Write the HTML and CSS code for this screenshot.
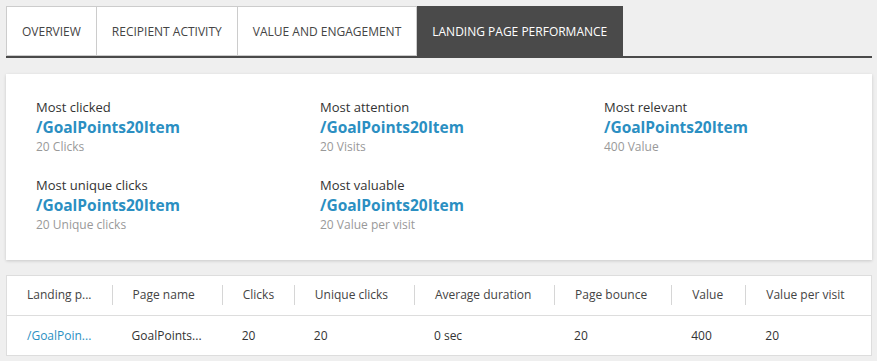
FILE: index.html
```html
<!DOCTYPE html>
<html>
<head>
<meta charset="utf-8">
<link rel="stylesheet" href="styles.css">
</head>
<body>
  <nav class="tabs">
    <a class="tab">OVERVIEW</a>
    <a class="tab">RECIPIENT ACTIVITY</a>
    <a class="tab">VALUE AND ENGAGEMENT</a>
    <a class="tab active">LANDING PAGE PERFORMANCE</a>
  </nav>

  <section class="summary">
    <div class="stat">
      <div class="stat-label">Most clicked</div>
      <a class="stat-link">/GoalPoints20Item</a>
      <div class="stat-sub">20 Clicks</div>
    </div>
    <div class="stat">
      <div class="stat-label">Most attention</div>
      <a class="stat-link">/GoalPoints20Item</a>
      <div class="stat-sub">20 Visits</div>
    </div>
    <div class="stat">
      <div class="stat-label">Most relevant</div>
      <a class="stat-link">/GoalPoints20Item</a>
      <div class="stat-sub">400 Value</div>
    </div>
    <div class="stat">
      <div class="stat-label">Most unique clicks</div>
      <a class="stat-link">/GoalPoints20Item</a>
      <div class="stat-sub">20 Unique clicks</div>
    </div>
    <div class="stat">
      <div class="stat-label">Most valuable</div>
      <a class="stat-link">/GoalPoints20Item</a>
      <div class="stat-sub">20 Value per visit</div>
    </div>
  </section>

  <table class="grid">
    <colgroup>
      <col class="c1"><col class="c2"><col class="c3"><col class="c4">
      <col class="c5"><col class="c6"><col class="c7"><col class="c8">
    </colgroup>
    <thead>
      <tr>
        <th><div class="th-in" title="Landing page">Landing p...</div></th>
        <th><div class="th-in sep">Page name</div></th>
        <th><div class="th-in sep">Clicks</div></th>
        <th><div class="th-in sep">Unique clicks</div></th>
        <th><div class="th-in sep">Average duration</div></th>
        <th><div class="th-in sep">Page bounce</div></th>
        <th><div class="th-in sep">Value</div></th>
        <th><div class="th-in sep">Value per visit</div></th>
      </tr>
    </thead>
    <tbody>
      <tr>
        <td><a class="cell-link" title="/GoalPoints20Item">/GoalPoin...</a></td>
        <td title="GoalPoints20Item">GoalPoints...</td>
        <td>20</td>
        <td>20</td>
        <td>0 sec</td>
        <td>20</td>
        <td>400</td>
        <td>20</td>
      </tr>
    </tbody>
  </table>
</body>
</html>
```

FILE: styles.css
```css
html, body {
  margin: 0;
  background: #efefef;
}

body {
  padding: 6px 5px 0 6px;
  font-family: "Open Sans", "Liberation Sans", sans-serif;
  color: #333;
}

.tabs {
  display: flex;
  border-bottom: 2px solid #4a4a4a;
}

.tab {
  display: flex;
  align-items: center;
  height: 48px;
  padding: 0 15px;
  background: #fff;
  border: 1px solid #ccc;
  border-left: none;
  font-size: 12px;
  color: #444;
  white-space: nowrap;
}

.tab:first-child {
  border-left: 1px solid #ccc;
}

.tab.active {
  background: #4a4a4a;
  border-color: #4a4a4a;
  color: #fff;
}

.summary {
  margin-top: 16px;
  background: #fff;
  box-shadow: 0 1px 3px rgba(0, 0, 0, 0.16);
  padding: 24px 30px 26px;
  display: grid;
  grid-template-columns: 284px 284px 1fr;
  row-gap: 20px;
}

.stat {
  display: flex;
  flex-direction: column;
}

.stat-label {
  font-size: 13px;
  line-height: 18px;
  color: #333;
}

.stat-link {
  font-size: 15.5px;
  line-height: 22px;
  font-weight: 700;
  color: #2b8fc2;
}

.stat-sub {
  font-size: 12px;
  line-height: 18px;
  color: #999;
}

.grid {
  margin-top: 15px;
  width: 100%;
  table-layout: fixed;
  border-collapse: collapse;
  background: #fff;
  border: 1px solid #ddd;
  font-size: 12px;
}

.c1 { width: 105px; }
.c2 { width: 110px; }
.c3 { width: 72px; }
.c4 { width: 120px; }
.c5 { width: 140px; }
.c6 { width: 117px; }
.c7 { width: 74px; }
.c8 { width: 126px; }

.grid th {
  height: 38px;
  padding: 0 0 1px;
  text-align: left;
  font-weight: 400;
  color: #444;
  border-bottom: 1px solid #ddd;
}

.th-in {
  padding-left: 20px;
  line-height: 20px;
  white-space: nowrap;
  overflow: hidden;
}

.th-in.sep {
  border-left: 1px solid #d6d6d6;
  padding-left: 20px;
}

.grid td {
  height: 39px;
  padding: 0 0 0 20px;
  color: #333;
  white-space: nowrap;
  overflow: hidden;
}

.cell-link {
  color: #2b8fc2;
}
```
